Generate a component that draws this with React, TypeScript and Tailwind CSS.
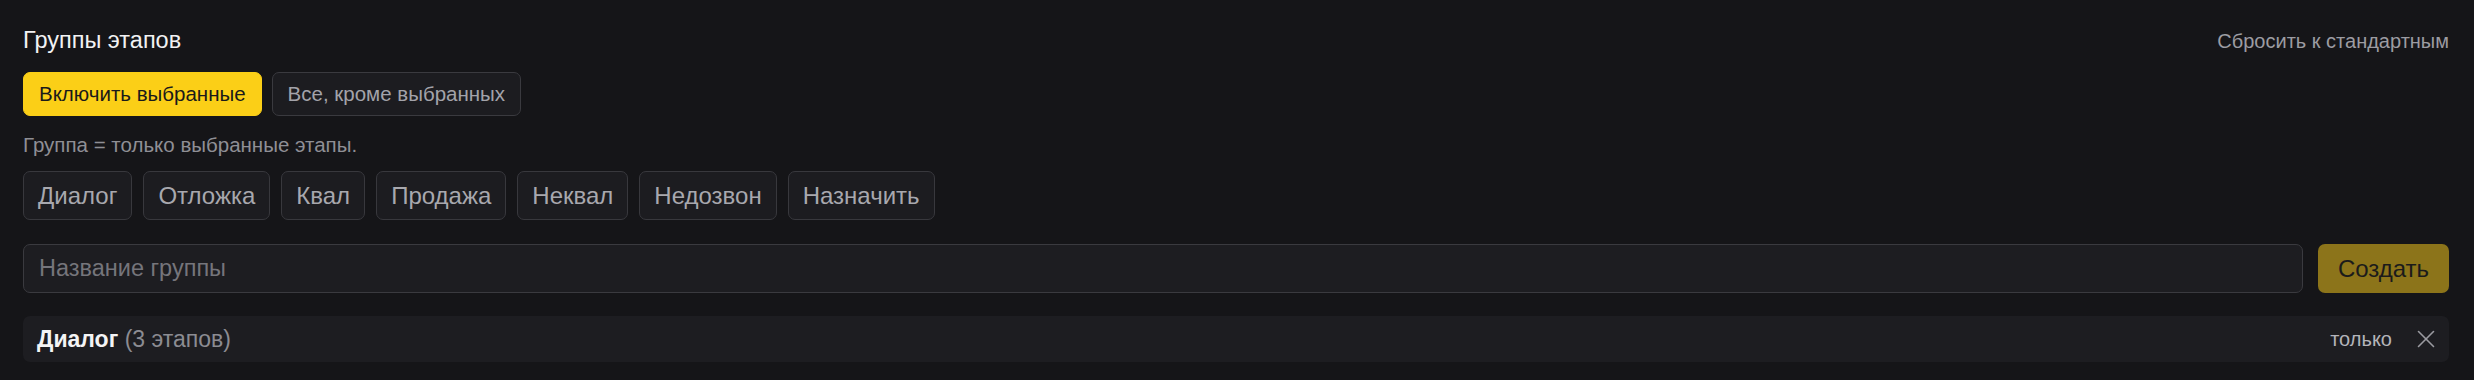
const stages = ["Диалог", "Отложка", "Квал", "Продажа", "Неквал", "Недозвон", "Назначить"];

function CloseIcon() {
  return (
    <svg width="18" height="18" viewBox="0 0 18 18" fill="none" stroke="currentColor" strokeWidth="1.6" strokeLinecap="round">
      <path d="M1.5 1.5 L16.5 16.5" />
      <path d="M16.5 1.5 L1.5 16.5" />
    </svg>
  );
}

export default function App() {
  return (
    <div className="min-h-[380px] w-full bg-[#151518] pl-[23px] pr-[25px] pt-[24px] font-['Liberation_Sans',Arial,sans-serif]">
      <div className="flex h-[34px] items-center justify-between">
        <h2 className="text-[23.5px] leading-none text-[#f2f2f3]">Группы этапов</h2>
        <button className="text-[20px] leading-none text-[#9c9ca2]">Сбросить к стандартным</button>
      </div>

      <div className="mt-[14px] flex gap-[10px]">
        <button className="h-[44px] rounded-[7px] border-[1.5px] border-[#fbcf17] bg-[#fbcf17] px-[15px] text-[20.5px] text-[#1a1a1a]">
          Включить выбранные
        </button>
        <button className="h-[44px] rounded-[7px] border-[1.5px] border-[#3a3a3f] bg-[#1c1c20] px-[15px] text-[20.5px] text-[#a3a3aa]">
          Все, кроме выбранных
        </button>
      </div>

      <p className="mt-[17px] text-[20.5px] leading-[24px] text-[#8f8f95]">Группа = только выбранные этапы.</p>

      <ul className="mt-[14px] flex gap-[11px]">
        {stages.map((s) => (
          <li key={s}>
            <button className="h-[49px] rounded-[7px] border-[1.5px] border-[#38383d] bg-[#1c1c20] px-[14px] text-[24px] text-[#a8a8ae]">
              {s}
            </button>
          </li>
        ))}
      </ul>

      <div className="mt-[24px] flex gap-[15px]">
        <input
          placeholder="Название группы"
          className="h-[49px] flex-1 rounded-[7px] border-[1.5px] border-[#3a3a3f] bg-[#1d1d21] px-[15px] text-[23.5px] text-[#e5e5e5] outline-none placeholder:text-[#75757b]"
        />
        <button className="h-[49px] w-[131px] rounded-[7px] bg-[#8c741a] text-[24px] text-[#1b1b1b]">Создать</button>
      </div>

      <div className="mt-[23px] flex h-[46px] items-center justify-between rounded-[7px] bg-[#1d1d21] pl-[14px] pr-[14px]">
        <div className="text-[23px] leading-none">
          <span className="font-semibold text-[#f4f4f5]">Диалог</span>
          <span className="text-[#8c8c92]"> (3 этапов)</span>
        </div>
        <div className="flex items-center gap-[25px]">
          <span className="text-[20px] font-medium leading-none text-[#b4b4ba]">только</span>
          <button className="text-[#9a9aa0]">
            <CloseIcon />
          </button>
        </div>
      </div>
    </div>
  );
}
